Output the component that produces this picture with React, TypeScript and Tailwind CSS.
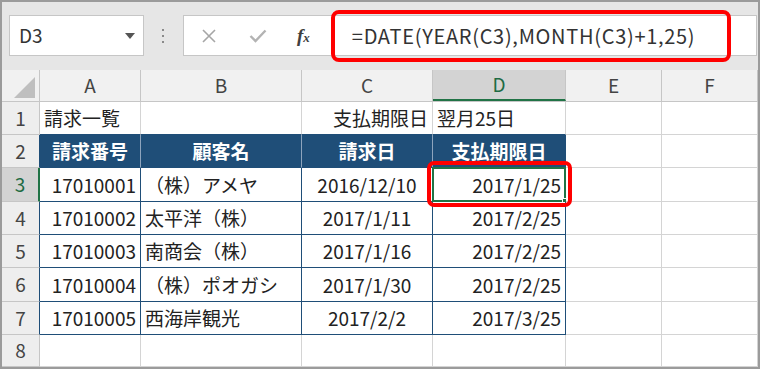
import React from "react";

const FONT = { fontFamily: '"Noto Sans CJK JP", "Noto Sans", sans-serif' };

type Align = "l" | "c" | "r";
type Cell = { t: string; a?: Align };

const rows: { h: string; cells: Cell[] }[] = [
  {
    h: "h-[33px]",
    cells: [{ t: "請求一覧", a: "l" }, { t: "" }, { t: "支払期限日", a: "r" }, { t: "翌月25日", a: "l" }],
  },
  {
    h: "h-[33px]",
    cells: [
      { t: "請求番号", a: "c" },
      { t: "顧客名", a: "c" },
      { t: "請求日", a: "c" },
      { t: "支払期限日", a: "c" },
    ],
  },
  {
    h: "h-[34px]",
    cells: [{ t: "17010001", a: "r" }, { t: "（株）アメヤ", a: "l" }, { t: "2016/12/10", a: "c" }, { t: "2017/1/25", a: "r" }],
  },
  {
    h: "h-[33px]",
    cells: [{ t: "17010002", a: "r" }, { t: "太平洋（株）", a: "l" }, { t: "2017/1/11", a: "c" }, { t: "2017/2/25", a: "r" }],
  },
  {
    h: "h-[33px]",
    cells: [{ t: "17010003", a: "r" }, { t: "南商会（株）", a: "l" }, { t: "2017/1/16", a: "c" }, { t: "2017/2/25", a: "r" }],
  },
  {
    h: "h-[34px]",
    cells: [{ t: "17010004", a: "r" }, { t: "（株）ポオガシ", a: "l" }, { t: "2017/1/30", a: "c" }, { t: "2017/2/25", a: "r" }],
  },
  {
    h: "h-[33px]",
    cells: [{ t: "17010005", a: "r" }, { t: "西海岸観光", a: "l" }, { t: "2017/2/2", a: "c" }, { t: "2017/3/25", a: "r" }],
  },
  { h: "h-[32px]", cells: [{ t: "" }, { t: "" }, { t: "" }, { t: "" }] },
];

const colW = ["w-[101px]", "w-[161px]", "w-[131px]", "w-[133px]", "w-[96px]", "flex-1"];
const letters = ["A", "B", "C", "D", "E", "F"];

const alignCls: Record<Align, string> = {
  l: "justify-start pl-[4px]",
  c: "justify-center",
  r: "justify-end pr-[4px]",
};

export default function App() {
  return (
    <div
      className="relative w-[760px] h-[369px] overflow-hidden border-2 border-[#9b9b9b] bg-[#e6e6e6] text-[19px] text-[#222]"
      style={FONT}
    >
      {/* formula bar */}
      <div className="flex h-[68px] items-start pt-[13px]">
        <div className="ml-[7px] flex h-[41px] w-[135px] items-center justify-between border border-[#c6c6c6] bg-white pl-[9px] pr-[8px] text-[#333]">
          <span>D3</span>
          <span className="h-0 w-0 border-x-[5px] border-t-[6px] border-x-transparent border-t-[#555]" />
        </div>
        <div className="ml-[18px] flex h-[41px] flex-col items-center justify-center gap-[4px]">
          <span className="h-[2px] w-[2px] bg-[#8a8a8a]" />
          <span className="h-[2px] w-[2px] bg-[#8a8a8a]" />
          <span className="h-[2px] w-[2px] bg-[#8a8a8a]" />
        </div>
        <div className="ml-[19px] mr-[1px] flex h-[41px] flex-1 items-center border border-[#c6c6c6] bg-white">
          <svg width="14" height="14" viewBox="0 0 14 14" className="ml-[18px]">
            <path d="M1 1 L13 13 M13 1 L1 13" stroke="#a6a6a6" strokeWidth="1.6" fill="none" />
          </svg>
          <svg width="18" height="14" viewBox="0 0 18 14" className="ml-[33px]">
            <path d="M1.5 7 L6.5 12 L16.5 1.5" stroke="#b3b3b3" strokeWidth="2.4" fill="none" />
          </svg>
          <span
            className="ml-[30px] font-bold italic text-[#404040] text-[19px] leading-none"
            style={{ fontFamily: '"Liberation Serif", serif' }}
          >
            f<span className="text-[13px]">x</span>
          </span>
          <span className="ml-[42px] text-[20px] tracking-[0.7px] text-[#333] whitespace-nowrap">
            =DATE(YEAR(C3),MONTH(C3)+1,25)
          </span>
        </div>
      </div>

      {/* column headers */}
      <div className="flex h-[32px] border-b border-[#c6c6c6] bg-[#f1f1f1]">
        <div className="relative w-[38px] border-r border-[#c6c6c6]">
          <span className="absolute bottom-[3px] right-[4px] h-0 w-0 border-b-[21px] border-l-[21px] border-b-[#bfbfbf] border-l-transparent" />
        </div>
        {letters.map((l, i) => (
          <div
            key={l}
            className={`${colW[i]} flex items-center justify-center ${
              l === "D"
                ? "bg-[#d3d3d3] text-[#1e6b43] border-b-2 border-[#217346] border-r border-r-[#c6c6c6]"
                : "text-[#444] border-r border-[#c6c6c6]"
            }`}
          >
            {l}
          </div>
        ))}
      </div>

      {/* rows */}
      {rows.map((r, ri) => {
        const n = ri + 1;
        const inTable = n >= 2 && n <= 7;
        const isHead = n === 2;
        return (
          <div key={n} className={`flex ${r.h}`}>
            <div
              className={`flex w-[38px] items-center justify-center border-b border-[#c6c6c6] ${
                n === 3
                  ? "bg-[#d3d3d3] text-[#1e6b43] border-r-2 border-r-[#217346]"
                  : inTable
                  ? "bg-[#eeeeee] text-[#444] border-r border-r-[#1f4e78]"
                  : "bg-[#eeeeee] text-[#444] border-r border-r-[#c6c6c6]"
              }`}
            >
              {n}
            </div>
            {[0, 1, 2, 3, 4, 5].map((ci) => {
              const c = ci < 4 ? r.cells[ci] : { t: "" };
              const tbl = inTable && ci < 4;
              let cls = "bg-white border-r border-b border-[#d4d4d4]";
              if (tbl && isHead) {
                cls = `bg-[#1f4e78] text-white font-bold border-b border-b-[#1f4e78] border-r ${
                  ci === 3 ? "border-r-[#1f4e78]" : "border-r-[#8ea4bd]"
                }`;
              } else if (tbl) {
                cls = "bg-white border-r border-b border-[#1f4e78]";
              } else if (n === 1 && ci < 4) {
                cls = "bg-white border-r border-r-[#d4d4d4] border-b border-b-[#1f4e78]";
              }
              const sel = n === 3 && ci === 3;
              return (
                <div
                  key={ci}
                  className={`${colW[ci]} relative flex items-center whitespace-nowrap pt-[1px] ${
                    alignCls[c.a ?? "l"]
                  } ${cls}`}
                >
                  {sel && (
                    <>
                      <span className="absolute inset-[-1px] border-2 border-[#217346]" />
                      <span className="absolute bottom-[-3px] right-[-3px] h-[6px] w-[6px] border border-white bg-[#217346]" />
                    </>
                  )}
                  <span className="relative">{c.t}</span>
                </div>
              );
            })}
          </div>
        );
      })}

      {/* red callouts */}
      <div className="absolute left-[329px] top-[8px] h-[52px] w-[400px] rounded-[8px] border-4 border-[#ff0000]" />
      <div className="absolute left-[425px] top-[159px] h-[46px] w-[145px] rounded-[7px] border-4 border-[#ff0000]" />
    </div>
  );
}
